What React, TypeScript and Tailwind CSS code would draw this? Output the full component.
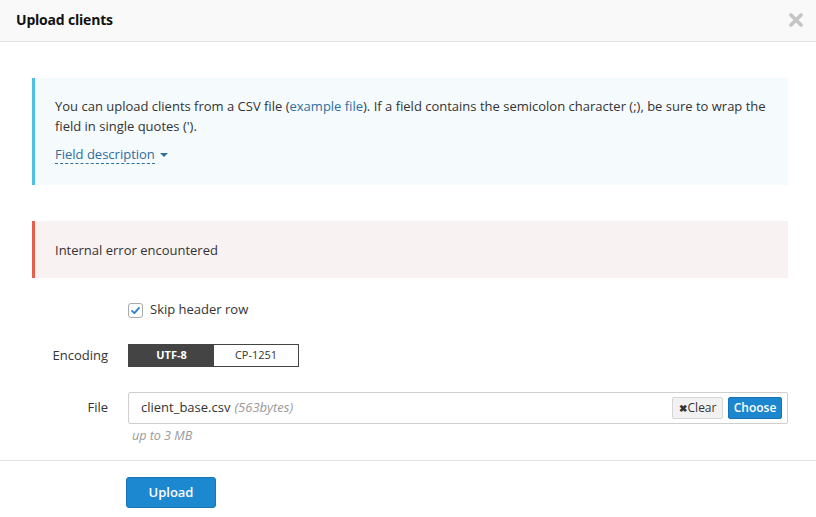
import React from "react";

const font = { fontFamily: '"Open Sans", "Liberation Sans", sans-serif' };

function CheckIcon() {
  return (
    <svg width="11" height="11" viewBox="0 0 12 12">
      <path d="M2.2 6.4 L4.8 8.8 L9.8 3.2" fill="none" stroke="#2a7fd0" strokeWidth="2" strokeLinecap="round" strokeLinejoin="round" />
    </svg>
  );
}

export default function App() {
  return (
    <div className="w-[816px] h-[517px] bg-white text-[13px] text-[#333] overflow-hidden font-['Open_Sans','Liberation_Sans',sans-serif]">
      {/* Header */}
      <div className="h-[42px] bg-[#f9f9f9] border-b border-[#e3e3e3] flex items-center justify-between pl-4 pr-[13px]">
        <span className="text-[14px] font-bold text-[#111] tracking-[-0.2px] mb-[2px]">Upload clients</span>
        <svg width="14" height="14" viewBox="0 0 14 14" className="mb-[1px]">
          <path d="M2 2 L12 12 M12 2 L2 12" stroke="#c4c4c4" strokeWidth="3.6" strokeLinecap="round" />
        </svg>
      </div>

      {/* Body */}
      <div className="px-[28px] pt-[36px]">
        <div className="ml-[4px] bg-[#f5fafd] border-l-[3px] border-[#4fc0df] pl-[20px] pr-4 pt-[18px] pb-[21px] leading-[20px]">
          <p>
            You can upload clients from a CSV file (<a className="text-[#2d6f9e]">example file</a>). If a field contains the semicolon character (;), be sure to wrap the field in single quotes (').
          </p>
          <div className="mt-[9px] flex items-center">
            <span className="text-[#2d6f9e] border-b border-dashed border-[#2d6f9e] leading-[18px]">Field description</span>
            <svg width="8" height="5" viewBox="0 0 8 5" className="ml-[5px] mt-[2px]">
              <path d="M0 0 L8 0 L4 4 Z" fill="#2d6f9e" />
            </svg>
          </div>
        </div>

        <div className="ml-[4px] mt-[36px] bg-[#f9f2f2] border-l-[3px] border-[#e8604d] pl-[20px] pt-[19px] pb-[18px] leading-[20px] h-[57px]">
          Internal error encountered
        </div>

        {/* Form */}
        <div className="mt-[22px] flex items-center h-[20px]">
          <div className="w-[100px]" />
          <span className="w-[15px] h-[15px] rounded-[3px] border border-[#a9a9a9] bg-white flex items-center justify-center">
            <CheckIcon />
          </span>
          <span className="ml-[7px]">Skip header row</span>
        </div>

        <div className="mt-[24px] flex items-center">
          <div className="w-[80px] text-right">Encoding</div>
          <div className="ml-[20px] flex border border-[#444] h-[23px] text-[11px]" style={font}>
            <div className="w-[85px] bg-[#444] text-white font-bold flex items-center justify-center">UTF-8</div>
            <div className="w-[84px] bg-white text-[#333] flex items-center justify-center">CP-1251</div>
          </div>
        </div>

        <div className="mt-[25px] flex items-center">
          <div className="w-[80px] text-right">File</div>
          <div className="ml-[20px] flex-1 h-[32px] border border-[#cfcfcf] rounded-[2px] flex items-center pl-[12px] pr-[5px]">
            <span>client_base.csv</span>
            <span className="ml-[4px] italic text-[#999]">(563bytes)</span>
            <div className="ml-auto flex items-center gap-[5px]">
              <button className="h-[22px] w-[51px] bg-[#f2f2f2] border border-[#d6d6d6] rounded-[2px] text-[12px] text-[#333] flex items-center justify-center">
                <span className="text-[10px] font-bold mr-[1px]">✖</span>Clear
              </button>
              <button className="h-[22px] w-[54px] bg-[#1c86cf] border border-[#1773b5] rounded-[2px] text-[12px] font-semibold text-white flex items-center justify-center">
                Choose
              </button>
            </div>
          </div>
        </div>
        <div className="ml-[104px] mt-[3px] text-[12.5px] italic text-[#999] leading-[18px]">up to 3 MB</div>
      </div>

      {/* Footer */}
      <div className="mt-[15px] border-t border-[#e3e3e3] pt-[16px] pl-[126px]">
        <button className="w-[90px] h-[31px] bg-[#1c88d0] border border-[#1876b8] rounded-[3px] text-white text-[13px] font-semibold">
          Upload
        </button>
      </div>
    </div>
  );
}
